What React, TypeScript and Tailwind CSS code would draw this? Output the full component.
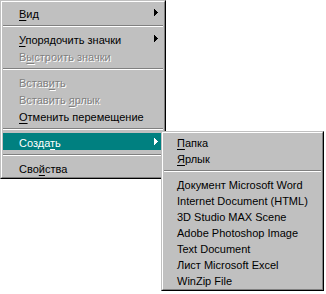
import React from "react";

type Item =
  | { sep: true }
  | {
      sep?: false;
      label: string;
      u?: number; // index of underlined letter
      off?: boolean;
      sub?: boolean;
      active?: boolean;
    };

const mainItems: Item[] = [
  { label: "Вид", u: 0, sub: true },
  { sep: true },
  { label: "Упорядочить значки", u: 0, sub: true },
  { label: "Выстроить значки", u: 1, off: true },
  { sep: true },
  { label: "Вставить", u: 5, off: true },
  { label: "Вставить ярлык", u: 9, off: true },
  { label: "Отменить перемещение", u: 0 },
  { sep: true },
  { label: "Создать", u: 5, sub: true, active: true },
  { sep: true },
  { label: "Свойства", u: 3 },
];

const newItems: Item[] = [
  { label: "Папка", u: 0 },
  { label: "Ярлык", u: 0 },
  { sep: true },
  { label: "Документ Microsoft Word" },
  { label: "Internet Document (HTML)" },
  { label: "3D Studio MAX Scene" },
  { label: "Adobe Photoshop Image" },
  { label: "Text Document" },
  { label: "Лист Microsoft Excel" },
  { label: "WinZip File" },
];

// pixel triangle, like the classic menu arrow
const Arrow = ({ color }: { color: string }) => (
  <svg width="4" height="7" viewBox="0 0 4 7" shapeRendering="crispEdges" className="-mt-[3px]">
    <rect x="0" y="0" width="1" height="7" fill={color} />
    <rect x="1" y="1" width="1" height="5" fill={color} />
    <rect x="2" y="2" width="1" height="3" fill={color} />
    <rect x="3" y="3" width="1" height="1" fill={color} />
  </svg>
);

const Label = ({ text, u }: { text: string; u?: number }) => {
  if (u === undefined) return <>{text}</>;
  return (
    <>
      {text.slice(0, u)}
      <span className="underline underline-offset-[2px]">{text[u]}</span>
      {text.slice(u + 1)}
    </>
  );
};

const Menu = ({
  items,
  pad,
  rowH,
  sepH,
  className,
  innerPad,
}: {
  items: Item[];
  pad: string;
  rowH: string;
  sepH: string;
  className?: string;
  innerPad: string;
}) => (
  <div
    className={`border border-t-[#c0c0c0] border-l-[#c0c0c0] border-r-black border-b-black bg-[#c0c0c0] ${className ?? ""}`}
  >
    <div className={`border border-t-white border-l-white border-r-[#808080] border-b-[#808080] ${innerPad}`}>
      {items.map((it, i) =>
        it.sep ? (
          <div key={i} className={`flex flex-col justify-center ${sepH}`}>
            <div className="h-px bg-[#808080]" />
            <div className="h-px bg-white" />
          </div>
        ) : (
          <div
            key={i}
            className={`flex items-center justify-between pt-[3px] pr-[5px] ${pad} ${rowH} ${
              it.active ? "bg-[#008080] text-white" : "text-black"
            }`}
          >
            <span
              className={`whitespace-nowrap ${
                it.off ? "text-[#808080] [text-shadow:1px_1px_0_#ffffff]" : ""
              }`}
            >
              <Label text={it.label} u={it.u} />
            </span>
            {it.sub && <Arrow color={it.active ? "#ffffff" : "#000000"} />}
          </div>
        )
      )}
    </div>
  </div>
);

export default function App() {
  return (
    <div className="relative w-[326px] h-[294px] bg-white overflow-hidden font-['Liberation_Sans',Arial,sans-serif] text-[11px] leading-none">
      <Menu
        items={mainItems}
        pad="pl-[16px]"
        rowH="h-[17px]"
        sepH="h-[9px]"
        innerPad="pt-[2px] px-px pb-px"
        className="w-[166px]"
      />
      <Menu
        items={newItems}
        pad="pl-[13px]"
        rowH="h-[16px]"
        sepH="h-[10px]"
        innerPad="p-px"
        className="absolute left-[161px] top-[131px] w-[163px]"
      />
    </div>
  );
}
